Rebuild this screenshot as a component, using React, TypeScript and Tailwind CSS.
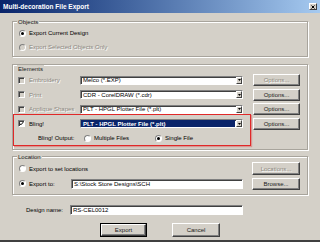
import React from "react";

const dis = "text-[#8a877f] [text-shadow:1px_1px_0_#ffffff]";

function Radio({ checked = false, disabled = false }: { checked?: boolean; disabled?: boolean }) {
  return (
    <span
      className={`relative flex items-center justify-center w-[7px] h-[7px] rounded-full border border-t-[#808080] border-l-[#808080] border-b-white border-r-white shrink-0 ${
        disabled ? "bg-[#d4d0c8]" : "bg-white"
      }`}
    >
      {checked && <span className="w-[3px] h-[3px] rounded-full bg-black" />}
    </span>
  );
}

function Check({ checked = false, disabled = false }: { checked?: boolean; disabled?: boolean }) {
  return (
    <span
      className={`flex items-center justify-center w-[7px] h-[7px] border border-t-[#808080] border-l-[#808080] border-b-white border-r-white shadow-[inset_1px_1px_0_#404040] shrink-0 ${
        disabled ? "bg-[#d4d0c8]" : "bg-white"
      }`}
    >
      {checked && (
        <svg width="5" height="5" viewBox="0 0 7 7">
          <path d="M1 3.5 L2.8 5.3 L6 1.5" stroke="#000" strokeWidth="1.4" fill="none" />
        </svg>
      )}
    </span>
  );
}

function Combo({ value, selected = false }: { value: string; selected?: boolean }) {
  return (
    <div className="flex items-center w-[163px] h-[9px] bg-white border border-t-[#808080] border-l-[#808080] border-b-white border-r-white shadow-[inset_1px_1px_0_#404040]">
      <div
        className={`flex-1 h-full flex items-center pl-[2px] mr-[1px] ${
          selected ? "bg-[#0a246a] text-white font-bold" : "text-black"
        }`}
      >
        {value}
      </div>
      <span className="flex items-center justify-center w-[6px] h-[7px] bg-[#d4d0c8] border border-t-white border-l-white border-b-[#404040] border-r-[#404040] shrink-0">
        <svg width="3" height="2" viewBox="0 0 3 2">
          <path d="M0 0 H3 L1.5 2 Z" fill="#000" />
        </svg>
      </span>
    </div>
  );
}

function Field({ value, w }: { value: string; w: string }) {
  return (
    <div
      className={`${w} h-[10px] flex items-center pl-[2px] bg-white border border-t-[#808080] border-l-[#808080] border-b-white border-r-white shadow-[inset_1px_1px_0_#404040] text-black`}
    >
      {value}
    </div>
  );
}

function Btn({
  label,
  disabled = false,
  primary = false,
  w = "w-[47px]",
  h = "h-[12px]",
}: {
  label: string;
  disabled?: boolean;
  primary?: boolean;
  w?: string;
  h?: string;
}) {
  return (
    <div className={`${w} ${h} ${primary ? "border border-black" : ""} shrink-0`}>
      <div
        className={`w-full h-full flex items-center justify-center bg-[#d4d0c8] border border-t-white border-l-white border-b-[#404040] border-r-[#404040] shadow-[inset_-1px_-1px_0_#808080] ${
          disabled ? dis : "text-[#202020]"
        }`}
      >
        {label}
      </div>
    </div>
  );
}

function Group({ title, className = "", children }: { title: string; className?: string; children: React.ReactNode }) {
  return (
    <div className={`mx-[12px] border border-[#a8a49c] shadow-[1px_1px_0_#ffffff,inset_1px_1px_0_#ffffff] ${className}`}>
      <div className="-mt-[4px] ml-[4px] w-fit px-[1px] bg-[#d4d0c8] leading-[8px] text-[#202020]">{title}</div>
      {children}
    </div>
  );
}

function ElementRow({
  label,
  value,
  checked = false,
  disabled = false,
  optsDisabled = false,
  selected = false,
}: {
  label: string;
  value: string;
  checked?: boolean;
  disabled?: boolean;
  optsDisabled?: boolean;
  selected?: boolean;
}) {
  return (
    <div className="flex items-center h-[14.5px]">
      <div className="flex items-center w-[67px] pl-[5px] gap-[4px]">
        <Check checked={checked} disabled={disabled} />
        <span className={disabled ? dis : "text-black"}>{label}</span>
      </div>
      <Combo value={value} selected={selected} />
      <div className="ml-[10px]">
        <Btn label="Options..." disabled={optsDisabled} />
      </div>
    </div>
  );
}

export default function App() {
  return (
    <div
      className="relative w-[320px] h-[242px] bg-[#d4d0c8] border-b-2 border-b-[#404040] overflow-hidden text-[6px] leading-[8px] text-black"
      style={{ fontFamily: '"Liberation Sans", Arial, sans-serif' }}
    >
      {/* title bar */}
      <div className="flex items-center h-[13px] pl-[3px] pr-[3px] bg-gradient-to-r from-[#0a246a] to-[#a6caf0]">
        <span className="flex-1 text-white font-bold text-[6.5px]">Multi-decoration File Export</span>
        <span className="flex items-center justify-center w-[8px] h-[7px] bg-[#d4d0c8] border border-t-white border-l-white border-b-[#404040] border-r-[#404040]">
          <svg width="4" height="4" viewBox="0 0 4 4">
            <path d="M0.5 0.5 L3.5 3.5 M3.5 0.5 L0.5 3.5" stroke="#000" strokeWidth="1" />
          </svg>
        </span>
      </div>

      <Group title="Objects" className="mt-[8px] pb-[2px]">
        <div className="flex items-center h-[14px] pl-[6px] gap-[3px]">
          <Radio checked />
          <span>Export Current Design</span>
        </div>
        <div className="flex items-center h-[14px] pl-[6px] gap-[3px]">
          <Radio disabled />
          <span className={dis}>Export Selected Objects Only</span>
        </div>
      </Group>

      <Group title="Elements" className="mt-[7px] pt-[3.75px] pb-[4px]">
        <ElementRow label="Embroidery" value="Melco (*.EXP)" disabled optsDisabled />
        <ElementRow label="Print" value="CDR - CorelDRAW (*.cdr)" disabled />
        <ElementRow label="Applique Shapes" value="PLT - HPGL Plotter File (*.plt)" disabled />
        <ElementRow label="Bling!" value="PLT - HPGL Plotter File (*.plt)" checked selected />
        <div className="flex items-center h-[14.5px]">
          <span className="ml-[25px] w-[46px]">Bling! Output:</span>
          <Radio />
          <span className="ml-[3px] w-[61px]">Multiple Files</span>
          <Radio checked />
          <span className="ml-[3px]">Single File</span>
        </div>
      </Group>

      <Group title="Location" className="mt-[6px] pb-[3px]">
        <div className="flex items-center h-[15px] pl-[6px]">
          <Radio />
          <span className="ml-[3px] w-[214px]">Export to set locations</span>
          <div className="ml-[9px]">
            <Btn label="Locations..." disabled w="w-[48px]" h="h-[13px]" />
          </div>
        </div>
        <div className="flex items-center h-[15px] pl-[6px]">
          <Radio checked />
          <span className="ml-[3px] w-[42px]">Export to:</span>
          <Field value="S:\Stock Store Designs\SCH" w="w-[172px]" />
          <div className="ml-[9px]">
            <Btn label="Browse..." w="w-[48px]" />
          </div>
        </div>
      </Group>

      <div className="flex items-center h-[14px] mt-[8px]">
        <span className="ml-[26px] w-[44px]">Design name:</span>
        <Field value="RS-CEL0012" w="w-[173px]" />
      </div>

      <div className="flex mt-[6px]">
        <div className="ml-[100px]">
          <Btn label="Export" primary w="w-[47px]" h="h-[14px]" />
        </div>
        <div className="ml-[25px]">
          <Btn label="Cancel" w="w-[48px]" h="h-[14px]" />
        </div>
      </div>

      {/* red annotation box drawn over the Bling! rows */}
      <div className="absolute left-[13px] top-[114px] w-[238px] h-[32px] border border-[#e02828] shadow-[1px_1px_1px_rgba(224,40,40,0.35)] pointer-events-none" />
    </div>
  );
}
